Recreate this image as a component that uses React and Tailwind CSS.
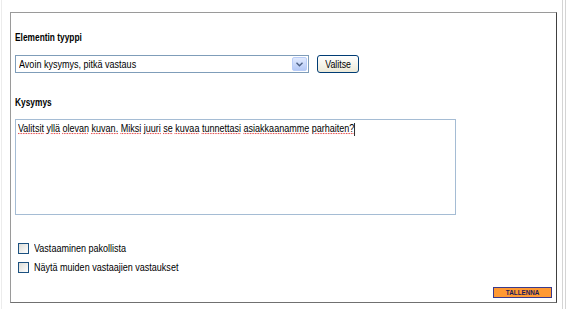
import React from 'react'

// the source font is much narrower than Liberation Sans, so squeeze the glyphs
const N = ({ children, bold }) => (
  <span className={`inline-block origin-left whitespace-nowrap ${bold ? 'scale-x-[0.76]' : 'scale-x-[0.82]'}`}>
    {children}
  </span>
)

const Checkbox = ({ label }) => (
  <label className="flex items-center gap-[5px] h-[19px]">
    <span className="block w-[11px] h-[11px] border border-[#1c5180] bg-gradient-to-br from-[#dcdcd7] to-white" />
    <N>{label}</N>
  </label>
)

const words = ['Valitsit', 'yllä', 'olevan', 'kuvan.', 'Miksi', 'juuri', 'se', 'kuvaa', 'tunnettasi', 'asiakkaanamme', 'parhaiten?']

const App = () => {
  return (
    <div
      className="relative w-[567px] h-[309px] bg-white overflow-hidden text-[11px] text-black"
      style={{ fontFamily: '"Liberation Sans", Arial, sans-serif' }}
    >
      <div className="absolute left-[1px] top-0 bottom-0 w-px bg-[#ececec]" />
      <div className="absolute right-[4px] top-0 bottom-0 w-px bg-[#d4d4d4]" />
      <div className="absolute right-[1px] top-0 bottom-0 w-px bg-[#d4d4d4]" />

      <div className="ml-[10px] mt-[12px] w-[547px] h-[291px] border-t border-l border-[#9a9a9a] border-r border-r-[#404040] border-b border-b-[#707070] pl-[4px] pt-[17px] flex flex-col">
        <div className="font-bold h-[14px] leading-[14px]">
          <N bold>Elementin tyyppi</N>
        </div>

        <div className="mt-[11px] flex items-center gap-[8px]">
          <div className="w-[294px] h-[18px] border border-[#7f9db9] flex items-center justify-between pl-[3px] pr-[1px]">
            <N>Avoin kysymys, pitkä vastaus</N>
            <span className="w-[15px] h-[14px] rounded-[2px] bg-gradient-to-b from-[#e1eafe] to-[#b4c8f6] border border-[#b9cdf8] flex items-center justify-center">
              <svg width="7" height="5" viewBox="0 0 7 5">
                <path d="M0.5 0.8 L3.5 3.8 L6.5 0.8" fill="none" stroke="#4d6185" strokeWidth="1.4" />
              </svg>
            </span>
          </div>
          <button className="w-[42px] h-[18px] rounded-[3px] border border-[#003c74] bg-gradient-to-b from-white to-[#ece9d8] text-[11px] leading-none flex items-center justify-center">
            <span className="inline-block scale-x-[0.8]">Valitse</span>
          </button>
        </div>

        <div className="mt-[22px] font-bold h-[14px] leading-[14px]">
          <N bold>Kysymys</N>
        </div>

        <div className="mt-[10px] w-[441px] h-[96px] border border-[#a5bcd4] pl-[2px] pt-[2px] leading-[13px]">
          <N>
            {words.map((w, i) => (
              <React.Fragment key={i}>
                <span className="underline decoration-dotted decoration-[#e03030]">{w}</span>
                {i < words.length - 1 ? ' ' : ''}
              </React.Fragment>
            ))}
            <span className="inline-block w-px h-[13px] bg-black align-middle" />
          </N>
        </div>

        <div className="mt-[24px] pl-[3px] flex flex-col">
          <Checkbox label="Vastaaminen pakollista" />
          <Checkbox label="Näytä muiden vastaajien vastaukset" />
        </div>

        <div className="mt-auto mb-[4px] mr-[4px] flex justify-end">
          <button className="w-[59px] h-[11px] bg-[#ff9933] border border-[#3a3a8c] text-[#1a1a5a] text-[7px] font-bold leading-none flex items-center justify-center">
            <span className="inline-block scale-x-[0.9]">TALLENNA</span>
          </button>
        </div>
      </div>
    </div>
  )
}

export default App
